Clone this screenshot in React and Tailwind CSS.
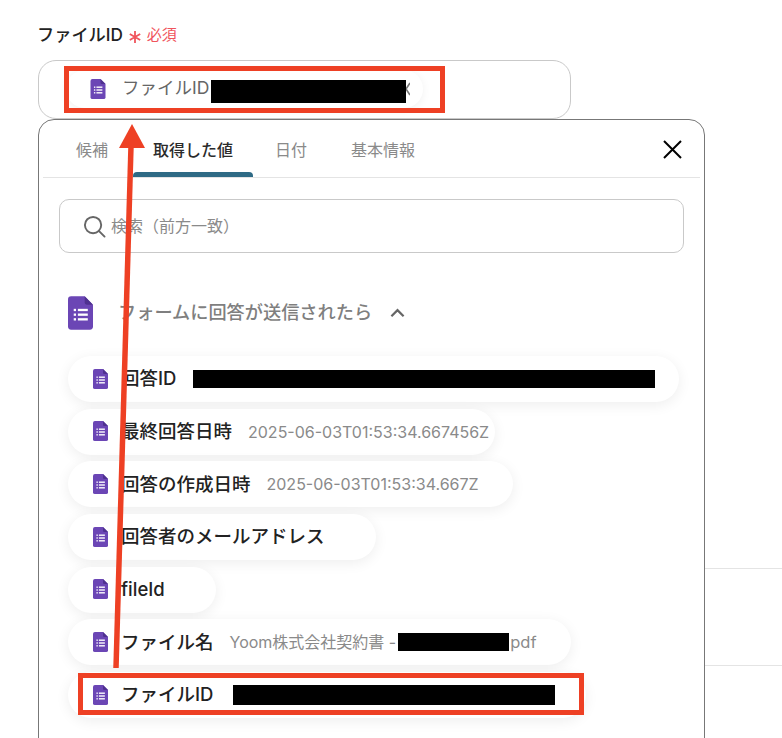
function FormIcon({ className = '' }) {
  return (
    <svg viewBox="0 0 24 32" className={className}>
      <path d="M3 0h13l8 8v21a3 3 0 0 1-3 3H3a3 3 0 0 1-3-3V3a3 3 0 0 1 3-3z" fill="#6b46b5" />
      <path d="M16 0l8 8h-6a2 2 0 0 1-2-2z" fill="#4f3190" />
      <g fill="#fff">
        <rect x="5.5" y="12" width="2.2" height="2.2" />
        <rect x="5.5" y="16.5" width="2.2" height="2.2" />
        <rect x="5.5" y="21" width="2.2" height="2.2" />
        <rect x="9.5" y="12" width="9.5" height="2.2" />
        <rect x="9.5" y="16.5" width="9.5" height="2.2" />
        <rect x="9.5" y="21" width="9.5" height="2.2" />
      </g>
    </svg>
  )
}

function Chip({ width, label, value, children }) {
  return (
    <div className="h-[46px] flex items-center bg-white rounded-full shadow-[0_3px_14px_rgba(0,0,0,0.07)] shrink-0" style={{ width }}>
      <FormIcon className="w-[15px] h-[20px] ml-[25px] -mt-[1px] shrink-0" />
      <span className="ml-[13px] text-[18.5px] font-medium text-[#222] whitespace-nowrap">{label}</span>
      {value && <span className="ml-4 text-[16px] text-[#8a8a8a] whitespace-nowrap">{value}</span>}
      {children}
    </div>
  )
}

const tabs = ['候補', '取得した値', '日付', '基本情報']

export default function App() {
  return (
    <div className="relative w-[782px] h-[738px] overflow-hidden bg-white pt-[23px] pl-[38px] font-['Inter','Noto_Sans_CJK_JP',sans-serif]">
      <div className="flex items-center h-[23px]">
        <span className="text-[17.2px] font-medium text-[#222] mt-[1px] -ml-[1px]">ファイルID</span>
        <svg viewBox="0 0 12 12" className="ml-[6px] mt-[5px] w-[12px] h-[12px]" stroke="#f0545c" strokeWidth="1.8" fill="none">
          <path d="M6 0v12M0.8 3l10.4 6M11.2 3L0.8 9" />
        </svg>
        <span className="ml-[6px] mt-[2px] text-[15px] text-[#f0545c]">必須</span>
      </div>

      <div className="mt-[14px] w-[533px] h-[59px] border border-[#c9c9c9] rounded-[18px] flex items-center pl-[27px]">
        <div className="w-[357px] h-[38px] rounded-full bg-white shadow-[0_2px_10px_rgba(0,0,0,0.06)] flex items-center pl-[24px] -mt-[1px]">
          <FormIcon className="w-[16px] h-[20px]" />
          <span className="ml-[16px] text-[17.5px] text-[#666] -mt-[2px]">ファイルID</span>
          <span className="w-[195px] h-[23px] bg-black ml-[2px] mt-[5px]" />
          <svg viewBox="0 0 4 14" className="w-[4px] h-[14px] -mt-[1px]" stroke="#777" strokeWidth="1.6" fill="none">
            <path d="M0 7l4-6M0 7l4 6" />
          </svg>
        </div>
      </div>

      <div className="w-[667px] h-[640px] border border-[#777] rounded-[16px] bg-white">
        <div className="h-[58px] mx-[4px] border-b border-[#e4e4e4] flex items-stretch pl-[33px] relative">
          {tabs.map((t, i) => (
            <div key={t} className={`relative flex items-center justify-center pt-[3px] text-[16px] ${i === 1 ? 'w-[120px] ml-[25px] font-medium text-[#2b2b2b]' : 'text-[#8a8a8a]'} ${i === 0 ? 'w-[32px]' : ''} ${i === 2 ? 'w-[32px] ml-[22px]' : ''} ${i === 3 ? 'w-[66px] ml-[43px]' : ''}`}>
              {t}
              {i === 1 && <div className="absolute bottom-0 left-0 right-0 h-[5px] rounded-t-[4px] bg-[#2e6a85]" />}
            </div>
          ))}
          <svg viewBox="0 0 20 20" className="absolute right-[18px] top-[20px] w-[20px] h-[20px]" stroke="#000" strokeWidth="2" fill="none">
            <path d="M2 1l17 17M19 1L2 18" />
          </svg>
        </div>

        <div className="mt-[21px] ml-[20px] w-[625px] h-[54px] border border-[#c9c9c9] rounded-[10px] flex items-center pl-[23px]">
          <svg viewBox="0 0 24 24" className="w-[23px] h-[23px]" fill="none" stroke="#666" strokeWidth="2" strokeLinecap="round">
            <circle cx="10.5" cy="10.5" r="8.5" />
            <path d="M16.5 16.5l6 6" />
          </svg>
          <span className="ml-[5px] text-[16px] text-[#8a8a8a]">検索（前方一致）</span>
        </div>

        <div className="mt-[41px] ml-[29px] h-[37px] flex items-center">
          <FormIcon className="w-[25px] h-[34px]" />
          <span className="ml-[25px] text-[18.2px] font-medium text-[#7f7f7f]">フォームに回答が送信されたら</span>
          <svg viewBox="0 0 16 10" className="ml-[18px] w-[15px] h-[10px]" fill="none" stroke="#666" strokeWidth="2.4">
            <path d="M1.5 8.5L8 2l6.5 6.5" />
          </svg>
        </div>

        <div className="mt-[25px] ml-[29px] flex flex-col gap-[6.7px]">
          <Chip width={611} label="回答ID">
            <span className="ml-[17px] w-[462px] h-[18px] bg-black" />
          </Chip>
          <Chip width={427} label="最終回答日時" value="2025-06-03T01:53:34.667456Z" />
          <Chip width={445} label="回答の作成日時" value="2025-06-03T01:53:34.667Z" />
          <Chip width={308} label="回答者のメールアドレス" />
          <Chip width={148} label="fileId" />
          <Chip width={503} label="ファイル名">
            <span className="ml-4 text-[16px] text-[#8a8a8a] whitespace-nowrap">Yoom株式会社契約書 -</span>
            <span className="ml-[2px] w-[111px] h-[18px] bg-black" />
            <span className="ml-[1px] text-[16.5px] text-[#8a8a8a]">pdf</span>
          </Chip>
          <Chip width={518} label="ファイルID">
            <span className="ml-[20px] w-[322px] h-[20px] bg-black -mt-[1px]" />
          </Chip>
        </div>
      </div>

      {/* background rows peeking out right of the panel */}
      <div className="absolute left-[705px] top-[568px] w-[77px] h-px bg-[#e4e4e4]" />
      <div className="absolute left-[705px] top-[665px] w-[77px] h-px bg-[#e4e4e4]" />

      {/* red annotations */}
      <div className="absolute left-[64px] top-[66px] w-[381px] h-[47px] border-[5px] border-[#ee4024]" />
      <div className="absolute left-[78px] top-[673px] w-[506px] h-[42px] border-[5px] border-[#ee4024]" />
      <svg className="absolute left-0 top-0 w-[782px] h-[738px] pointer-events-none" viewBox="0 0 782 738">
        <path d="M116 668L131 146" stroke="#ee4024" strokeWidth="5.5" fill="none" />
        <path d="M132 124L145 148H119z" fill="#ee4024" />
      </svg>
    </div>
  )
}
